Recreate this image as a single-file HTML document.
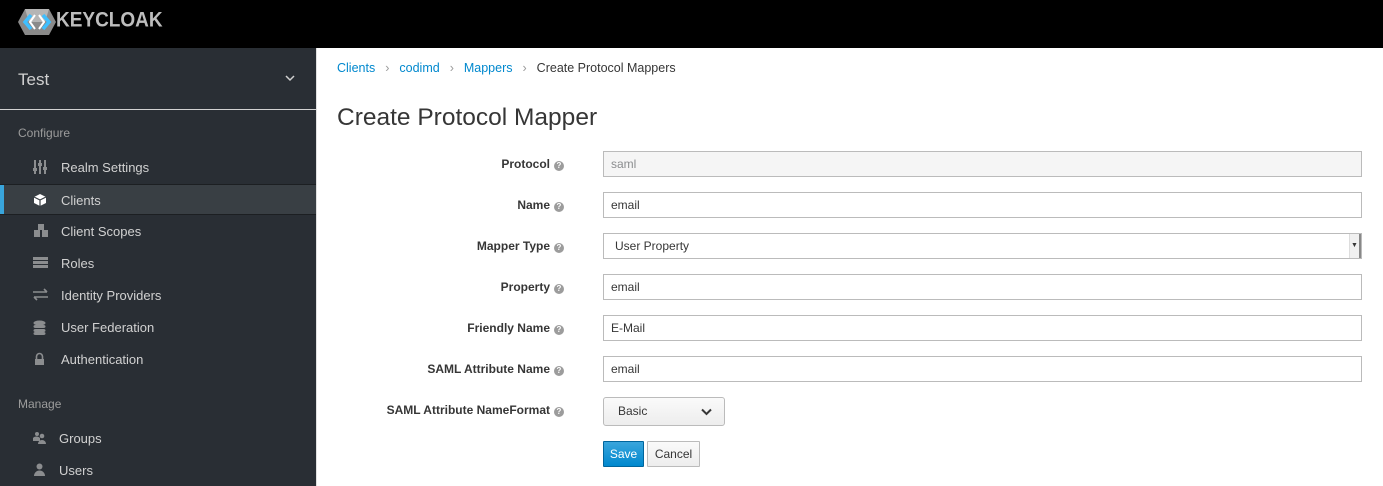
<!DOCTYPE html>
<html><head><style>
*{box-sizing:border-box;margin:0;padding:0}
body{width:1383px;height:486px;overflow:hidden;font-family:"Liberation Sans",sans-serif;background:#fff;position:relative;color:#363636}
.hdr{position:absolute;left:0;top:0;width:1383px;height:48px;background:#000}
.logo{position:absolute;left:56px;top:10px;color:#bdbdbd;font-weight:bold;font-size:19px;letter-spacing:0px;transform:scaleY(1.1)}
.side{position:absolute;left:0;top:48px;width:317px;height:438px;background:#292e34;border-right:1px solid #e0e0e0}
.realm{position:absolute;left:18px;top:22px;color:#d1d1d1;font-size:17px}
.chev{position:absolute;left:285px;top:26px}
.div{position:absolute;left:0;top:61px;width:316px;height:1px;background:#d1d1d1}
.sec{position:absolute;left:18px;color:#9c9c9c;font-size:12px}
.it{position:absolute;left:0;width:316px;height:31px;color:#d1d1d1;font-size:13px;line-height:31px}
.it span{position:absolute;left:61px}
.it svg{position:absolute;left:33px;top:8px}
.act{background:#393f44;border-top:1px solid #1c1f22;border-bottom:1px solid #1c1f22}
.act:before{content:"";position:absolute;left:0;top:0;width:4px;height:100%;background:#39a5dc}
.bc{position:absolute;left:337px;top:61px;font-size:12.5px;color:#363636}
.bc a{color:#0088ce}
.bc i{font-style:normal;color:#9c9c9c;margin:0 10px}
h1{position:absolute;left:337px;top:104px;font-weight:normal;font-size:24.5px;color:#363636}
.lab{position:absolute;right:819px;font-size:12px;font-weight:bold;color:#363636;text-align:right;white-space:nowrap}
.q{display:inline-block;width:10px;height:10px;border-radius:50%;background:#9c9c9c;color:#fff;font-size:8px;line-height:10px;text-align:center;margin-left:4px;vertical-align:0px}
.in{position:absolute;left:603px;width:759px;height:26px;border:1px solid #bbb;font-size:12px;line-height:24px;padding-left:7px;color:#363636}
.btn{position:absolute;font-size:12px;border-radius:1px;text-align:center}
</style></head><body>
<div class="hdr">
<svg style="position:absolute;left:17px;top:8px" width="40" height="28" viewBox="0 0 40 28"><polygon points="8,1 32,1 39,14 32,27 8,27 1,14" fill="#8a8a8a"/><polygon points="8,1 32,1 28,14 12,14" fill="#b5b5b5"/><path d="M14,7 L8,14 L14,21 M26,7 L32,14 L26,21" stroke="#3fbfff" stroke-width="3.5" fill="none"/><path d="M18,7 L13,14 L18,21 M22,7 L27,14 L22,21" stroke="#fff" stroke-width="2" fill="none"/></svg>
<div class="logo">KEYCLOAK</div></div>
<div class="side">
<div class="realm">Test</div>
<svg class="chev" width="10" height="8" viewBox="0 0 10 8"><path d="M1,2 L5,6 L9,2" stroke="#d1d1d1" stroke-width="1.5" fill="none"/></svg>
<div class="div"></div>
<div class="sec" style="top:78px">Configure</div>
<div class="it" style="top:104px"><svg width="14" height="14" viewBox="0 0 14 14" fill="#8b8d8f"><rect x="1" y="0" width="2" height="14"/><rect x="6" y="0" width="2" height="14"/><rect x="11" y="0" width="2" height="14"/><rect x="0" y="8" width="4" height="3"/><rect x="5" y="3" width="4" height="3"/><rect x="10" y="7" width="4" height="3"/></svg><span>Realm Settings</span></div>
<div class="it act" style="top:136px"><svg width="14" height="14" viewBox="0 0 14 14"><path d="M7,1 L13,4 L13,10 L7,13 L1,10 L1,4Z" fill="#fff"/><path d="M1,4 L7,7 L13,4 M7,7 L7,13" stroke="#393f44" stroke-width="1.2" fill="none"/></svg><span>Clients</span></div>
<div class="it" style="top:168px"><svg width="16" height="14" viewBox="0 0 16 14" fill="#8b8d8f"><rect x="5" y="0" width="6" height="6"/><rect x="1" y="6" width="6" height="7"/><rect x="9" y="6" width="6" height="7"/></svg><span>Client Scopes</span></div>
<div class="it" style="top:200px"><svg width="15" height="13" viewBox="0 0 15 13" fill="#8b8d8f"><rect y="1" width="15" height="3"/><rect y="5" width="15" height="3"/><rect y="9" width="15" height="3"/></svg><span>Roles</span></div>
<div class="it" style="top:232px"><svg width="15" height="13" viewBox="0 0 15 13" fill="none" stroke="#8b8d8f" stroke-width="1.6"><path d="M0,4 H14 M11,1 L14,4 M15,9 H1 M4,12 L1,9"/></svg><span>Identity Providers</span></div>
<div class="it" style="top:264px"><svg width="13" height="15" viewBox="0 0 13 15" fill="#8b8d8f"><ellipse cx="6.5" cy="3" rx="6" ry="2.5"/><rect x="0.5" y="5" width="12" height="3" rx="2"/><rect x="0.5" y="9" width="12" height="3" rx="2"/><rect x="0.5" y="12" width="12" height="3" rx="2"/></svg><span>User Federation</span></div>
<div class="it" style="top:296px"><svg width="13" height="14" viewBox="0 0 13 14"><path d="M3.5,7 V4.5 a3,3 0 0 1 6,0 V7" stroke="#8b8d8f" stroke-width="1.6" fill="none"/><rect x="2" y="7" width="9" height="6" fill="#8b8d8f"/></svg><span>Authentication</span></div>
<div class="sec" style="top:349px">Manage</div>
<div class="it" style="top:375px"><svg width="14" height="14" viewBox="0 0 14 14" fill="#8b8d8f"><circle cx="4" cy="3" r="2"/><circle cx="9" cy="5" r="2.3"/><path d="M0,10 a4,3 0 0 1 7,-3 V10Z"/><path d="M5,13 a4,4 0 0 1 8,0Z"/></svg><span style="left:59px">Groups</span></div>
<div class="it" style="top:407px"><svg width="13" height="14" viewBox="0 0 13 14" fill="#8b8d8f"><circle cx="6.5" cy="3.5" r="3"/><path d="M1,13 a5.5,5.5 0 0 1 11,0Z"/></svg><span style="left:59px">Users</span></div>
</div>
<div class="bc"><a>Clients</a><i>›</i><a>codimd</a><i>›</i><a>Mappers</a><i>›</i>Create Protocol Mappers</div>
<h1>Create Protocol Mapper</h1>
<div class="lab" style="top:157px">Protocol<span class="q">?</span></div>
<div class="in" style="top:151px;background:#f5f5f5;color:#8b8d8f">saml</div>
<div class="lab" style="top:198px">Name<span class="q">?</span></div>
<div class="in" style="top:192px">email</div>
<div class="lab" style="top:239px">Mapper Type<span class="q">?</span></div>
<div class="in" style="top:233px;padding-left:11px;border-color:#bbb">User Property<div style="position:absolute;right:0;top:0;width:12px;height:24px;background:#f0f0f0;border-left:1px solid #ddd;border-right:2px solid #888;font-size:7px;line-height:24px;text-align:center">▼</div></div>
<div class="lab" style="top:280px">Property<span class="q">?</span></div>
<div class="in" style="top:274px">email</div>
<div class="lab" style="top:321px">Friendly Name<span class="q">?</span></div>
<div class="in" style="top:315px">E-Mail</div>
<div class="lab" style="top:362px">SAML Attribute Name<span class="q">?</span></div>
<div class="in" style="top:356px">email</div>
<div class="lab" style="top:403px">SAML Attribute NameFormat<span class="q">?</span></div>
<div class="btn" style="left:603px;top:397px;width:122px;height:29px;border:1px solid #bbb;border-radius:3px;background:linear-gradient(#fafafa,#ededed);text-align:left;padding-left:14px;line-height:27px">Basic<svg style="position:absolute;right:12px;top:10px" width="11" height="8" viewBox="0 0 11 8"><path d="M1,1.5 L5.5,6 L10,1.5" stroke="#363636" stroke-width="2" fill="none"/></svg></div>
<div class="btn" style="left:603px;top:441px;width:41px;height:26px;background:linear-gradient(#39a5dc,#0088ce);border:1px solid #00659c;color:#fff;line-height:24px">Save</div>
<div class="btn" style="left:647px;top:441px;width:53px;height:26px;background:linear-gradient(#fafafa,#ededed);border:1px solid #bbb;color:#363636;line-height:24px">Cancel</div>
</body></html>
